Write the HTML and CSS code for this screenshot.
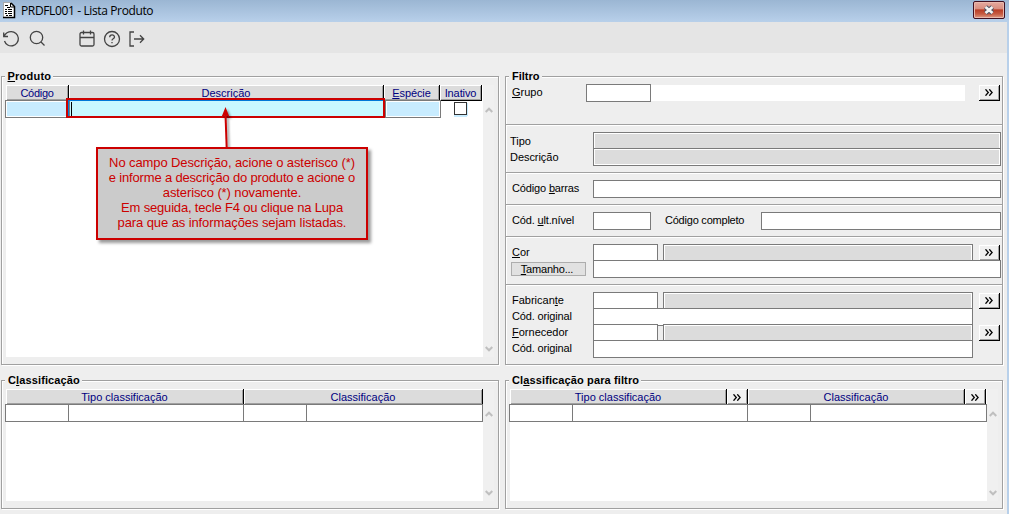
FILE: index.html
```
<!DOCTYPE html>
<html lang="pt-BR">
<head>
<meta charset="utf-8">
<title>PRDFL001 - Lista Produto</title>
<link rel="stylesheet" href="styles.css">
</head>
<body>
<svg class="defs" width="0" height="0">
  <symbol id="more" viewBox="0 0 8 7"><path d="M.5 .3L3.300 3.500L.5 6.700M4.300 .3L7.100 3.500L4.300 6.700" fill="none" stroke="#000" stroke-width="1.300"/></symbol>
  <symbol id="up" viewBox="0 0 8 6"><path d="M.7 5L4 1.7L7.3 5" fill="none" stroke="#bfbfbf" stroke-width="2"/></symbol>
  <symbol id="down" viewBox="0 0 8 6"><path d="M.7 1L4 4.3L7.3 1" fill="none" stroke="#bfbfbf" stroke-width="2"/></symbol>
</svg>
<div class="window">
  <header class="titlebar">
    <svg class="doc" width="14" height="17" viewBox="0 0 14 17"><path d="M1 1H9L13 5V16H1Z" fill="#fff"/><path d="M1.500 1V15M1 .5H9" stroke="#aaa"/><path d="M1 15.500H12.500V4.500L9 1" fill="none" stroke="#000" stroke-width="1.500"/><path d="M8.500 1V5H12" fill="none" stroke="#000"/><path d="M3 3.500H6M5 5.500H8M3 7.500H5M6 7.500H10M3 9.500H5M6 9.500H10M3 11.500H5M6 11.500H10M4 13.500H6M7 13.500H10" stroke="#000"/></svg>
    <span class="title">PRDFL001 - Lista Produto</span>
    <button class="close" aria-label="Fechar"><svg width="12" height="10" viewBox="0 0 12 10"><path d="M2.500 2L9.500 8M9.500 2L2.500 8" stroke="#4b5263" stroke-width="4.600"/><path d="M2.500 2L9.500 8M9.500 2L2.500 8" stroke="#f4f4f4" stroke-width="2.700"/></svg></button>
  </header>
  <nav class="toolbar">
    <svg width="18" height="18" viewBox="0 0 18 18"><path d="M1.700 2.500V6.500H6M2 6.300C3.600 3.200 6 1.700 9.200 1.700A7.100 7.100 0 1 1 2.500 11"/></svg>
    <svg class="lens" width="18" height="18" viewBox="0 0 18 18"><circle cx="7.500" cy="7.500" r="6.200"/><path d="M12 12L15.500 15.500"/></svg>
    <svg class="cal" width="18" height="18" viewBox="0 0 18 18"><rect x="2" y="2.500" width="14" height="13.500" rx="1.500"/><path d="M2 7.500H16M5.500 .5V4.500M12.500 .5V4.500"/></svg>
    <svg class="help" width="18" height="18" viewBox="0 0 18 18"><circle cx="9" cy="9" r="7.500"/><path d="M6.700 7.200C6.700 4.200 11.500 4.200 11.500 7C11.500 8.800 9 8.800 9 10.500M9 12V13.300"/></svg>
    <svg class="exit" width="18" height="18" viewBox="0 0 18 18"><path d="M6 2H2V16H6M6 9H15.500M12 5.300L15.700 9L12 12.700"/></svg>
  </nav>
  <main class="panels">
    <section class="panel">
      <h2 class="legend l-prod"><u>P</u>roduto</h2>
      <div class="grid">
        <div class="sheet">
          <div class="head"><span class="c1">Código</span><span class="c2">Descrição</span><span class="c3"><u>E</u>spécie</span><span class="c4">Inativo</span></div>
          <div class="row active"><i class="code"></i><i class="desc"></i><i class="kind"></i><b class="check"></b></div>
        </div>
        <div class="scroll"><svg width="8" height="6"><use href="#up"/></svg><svg width="8" height="6"><use href="#down"/></svg></div>
      </div>
    </section>
    <section class="panel filter">
      <h2 class="legend l-filt">Filtro</h2>
      <div class="sec s-group">
        <div class="line"><label class="w-grp"><u>G</u>rupo</label><i class="field w65"></i><i class="plain"></i><button class="more gap14"><svg width="8" height="7"><use href="#more"/></svg></button></div>
      </div>
      <div class="sec s-type">
        <div class="line"><label class="shift">Tipo</label><i class="field off w408"></i></div>
        <div class="line"><label class="shift">Descrição</label><i class="field off w408"></i></div>
      </div>
      <div class="sec"><div class="line"><label class="tight">Código <u>b</u>arras</label><i class="field w408"></i></div></div>
      <div class="sec"><div class="line"><label class="tight">Cód. <u>u</u>lt.nível</label><i class="field w58"></i><label class="full">Código completo</label><i class="field w240"></i></div></div>
      <div class="sec s-two">
        <div class="line"><label><u>C</u>or</label><i class="field w65"></i><i class="field off w310"></i><button class="more"><svg width="8" height="7"><use href="#more"/></svg></button></div>
        <div class="line"><button class="size"><u>T</u>amanho...</button><i class="field w408"></i></div>
      </div>
      <div class="sec s-four">
        <div class="line"><label>Fabrican<u>t</u>e</label><i class="field w65"></i><i class="field off w310"></i><button class="more"><svg width="8" height="7"><use href="#more"/></svg></button></div>
        <div class="line"><label class="tight">Cód. original</label><i class="field w380"></i></div>
        <div class="line"><label><u>F</u>ornecedor</label><i class="field w65"></i><i class="field off w310"></i><button class="more"><svg width="8" height="7"><use href="#more"/></svg></button></div>
        <div class="line"><label class="tight">Cód. original</label><i class="field w380"></i></div>
      </div>
    </section>
    <section class="panel">
      <h2 class="legend">C<u>l</u>assificação</h2>
      <div class="grid">
        <div class="sheet">
          <div class="head low"><span class="k1">Tipo classificação</span><span class="k2">Classificação</span></div>
          <div class="row cells"><i></i><i></i><i></i><i></i></div>
        </div>
        <div class="scroll"><svg width="8" height="6"><use href="#up"/></svg><svg width="8" height="6"><use href="#down"/></svg></div>
      </div>
    </section>
    <section class="panel">
      <h2 class="legend">Cl<u>a</u>ssificação para filtro</h2>
      <div class="grid">
        <div class="sheet">
          <div class="head low"><span class="m1">Tipo classificação</span><span class="go"><svg width="8" height="7"><use href="#more"/></svg></span><span class="m2">Classificação</span><span class="go"><svg width="8" height="7"><use href="#more"/></svg></span></div>
          <div class="row cells"><i></i><i></i><i></i><i></i></div>
        </div>
        <div class="scroll"><svg width="8" height="6"><use href="#up"/></svg><svg width="8" height="6"><use href="#down"/></svg></div>
      </div>
    </section>
  </main>
  <div class="mark"></div>
  <svg class="arrow" width="20" height="42" viewBox="0 0 20 42"><path d="M10.700 42L9.500 8" stroke="#cc0000" stroke-width="2"/><path d="M9.500 1L13.500 11Q9.500 8.500 5.500 11Z" fill="#cc0000"/></svg>
  <div class="callout">
    <p>No campo Descrição, acione o asterisco (*)</p>
    <p class="narrow">e informe a descrição do produto e acione o</p>
    <p>asterisco (*) novamente.</p>
    <p class="narrow">Em seguida, tecle F4 ou clique na Lupa</p>
    <p>para que as informações sejam listadas.</p>
  </div>
</div>
</body>
</html>
```
FILE: styles.css
```
* { box-sizing: border-box; }
body { margin: 0; font: 11px/16px "Liberation Sans", Arial, sans-serif; color: #000; background: #eee; overflow: hidden; }
.defs { display: block; position: absolute; }
button { margin: 0; padding: 0; font: inherit; color: #000; }
u { text-decoration: underline; text-underline-offset: 1px; text-decoration-thickness: 1px; text-decoration-skip-ink: none; }
.window { position: relative; width: 1009px; height: 514px; background: #eee; border-right: 2px solid #b8d0ea; }
.titlebar { display: flex; align-items: flex-start; width: 1009px; height: 22px; background: linear-gradient(#9bb6d3, #b8d0ea); }
.doc { margin: 2px 0 0 2px; }
.title { margin-left: 5px; font: 12px/22px "Open Sans", sans-serif; letter-spacing: -0.37px; white-space: nowrap; }
.close { display: flex; align-items: center; justify-content: center; width: 32px; height: 18px; margin: 1px 4px 0 auto; border: 1px solid #401020; border-radius: 2px; background: linear-gradient(#e4aaa0 0%, #d88d7e 45%, #b83c25 48%, #c75b42 75%, #dc9b84 100%); box-shadow: inset 0 0 0 1px #e9b9ae; }
.toolbar { display: flex; align-items: center; height: 31px; padding: 2px 0 0 2px; background: #e5e5e5; }
.toolbar svg { fill: none; stroke: #444; stroke-width: 1.300; }
.toolbar .lens { margin-left: 9px; }
.toolbar .cal { margin-left: 31px; }
.toolbar .help { margin-left: 7px; }
.toolbar .exit { margin-left: 7px; }
.panels { display: grid; grid-template-columns: 498px 498px; grid-template-rows: 289px 129px; gap: 15px 6px; padding: 23px 0 0 1px; }
.panel { position: relative; border: 1px solid #a0a0a0; box-shadow: inset 1px 1px 0 #fff, 1px 1px 0 #fff; padding: 8px 3px 7px 4px; }
.legend { position: absolute; left: 3px; top: -9px; margin: 0; padding: 0 2px 0 3px; background: #eee; font-size: 11px; line-height: 16px; letter-spacing: 0.12px; white-space: nowrap; }
.l-prod { left: 2.500px; letter-spacing: 0.220px; }
.filter .l-filt { letter-spacing: 0; }
.grid { display: flex; height: 100%; }
.sheet { width: 477px; background: #fff; }
.head { display: flex; height: 16px; color: #000080; }
.head span { display: flex; align-items: center; justify-content: center; background: #dcdcdc; border-right: 1px solid #000; border-bottom: 1px solid #000; box-shadow: inset 1px 1px 0 #fff, inset -1px -1px 0 #a0a0a0; white-space: nowrap; }
.low { height: 15px; }
.head.low span { border-bottom: 0; padding-top: 1px; }
.c1 { width: 63px; letter-spacing: -0.3px; } .c2 { width: 315px; } .c3 { width: 56px; letter-spacing: -0.1px; } .c4 { width: 42px; letter-spacing: -0.1px; }
.k1 { width: 238px; } .k2 { width: 239px; }
.m1 { width: 217px; } .m2 { width: 217px; }
.head .go { width: 21px; background: #f0f0f0; }
.row { display: flex; }
.active { height: 18px; margin: -1px 0 0 -1px; }
.active i { border: 1px solid #7a7a7a; }
.code { width: 64px; background: #c8ecff; box-shadow: inset 0 0 0 1px #fff; }
.desc { width: 316px; background: #c8f8ff; }
.kind { width: 56px; background: #c8ecff; box-shadow: inset 0 0 0 1px #fff; }
.check { width: 13px; height: 13px; margin: 2px 0 0 13px; background: #fff; border: 1px solid #333; box-shadow: 1px 1px 0 #c8ecff, 0 2px 0 #c8ecff; }
.cells { height: 18px; width: 478px; margin-left: -1px; border: 1px solid #7a7a7a; }
.cells i { border-right: 1px solid #7a7a7a; }
.cells i:nth-child(1) { width: 63px; }
.cells i:nth-child(2) { width: 175px; }
.cells i:nth-child(3) { width: 63px; }
.cells i:nth-child(4) { border: 0; }
.scroll { display: flex; flex-direction: column; justify-content: space-between; align-items: center; width: 11px; background: #f0f0f0; padding: 22px 0 5px; }
.sec { height: 32px; border-top: 1px solid #a0a0a0; box-shadow: inset 0 1px 0 #fff; padding: 7px 0 0 6px; }
.filter { padding: 0; }
.filter .s-group { height: 47px; border: 0; box-shadow: none; padding-top: 7px; }
.s-type, .s-two { height: 48px; }
.s-four { height: 79px; }
.line { display: flex; height: 16px; white-space: nowrap; }
.line label { width: 81px; flex: none; }
.line .w-grp { width: 74px; }
.line .shift { margin-left: -2px; width: 83px; padding-top: 1px; letter-spacing: -0.05px; }
.line .tight { letter-spacing: -0.150px; }
.line .full { width: 110px; padding-left: 14px; letter-spacing: -0.220px; }
.field { flex: none; height: 18px; border: 1px solid #7a7a7a; background: #fff; }
.field.off { background: #dcdcdc; box-shadow: inset 0 0 0 1px #fff; }
.w65 { width: 65px; }
.w408 { width: 408px; }
.w58 { width: 58px; }
.w240 { width: 240px; }
.w380 { width: 380px; }
.w310 { width: 310px; margin-left: 5px; }
.plain { width: 314px; height: 16px; margin-top: 1px; background: #fff; }
.more { display: flex; align-items: center; justify-content: center; flex: none; width: 21px; height: 16px; margin: 1px 0 0 6px; border: 1px solid #000; border-width: 0 1px 1px 0; background: #f0f0f0; box-shadow: inset 1px 1px 0 #fff, inset -1px -1px 0 #a0a0a0; }
.gap14 { margin-left: 14px; }
.size { width: 75px; height: 14px; margin: 2px 7px 0 -1px; padding-right: 3px; border: 1px solid #adadad; background: #e1e1e1; line-height: 12px; letter-spacing: -0.2px; }
.mark { position: absolute; left: 66px; top: 98px; width: 319px; height: 20px; border: 2px solid #cc0000; box-shadow: inset 1px 1px 0 #0078d7; }
.mark::after { content: ""; position: absolute; left: 3px; top: 2px; width: 1px; height: 14px; background: #000; }
.arrow { position: absolute; left: 216px; top: 106px; filter: drop-shadow(2px 2px 1px #0006); }
.callout { position: absolute; left: 96px; top: 147px; width: 272px; height: 93px; border: 2px solid #cc0000; background: #cbcbcb; box-shadow: 3px 3px 3px #0006; padding: 7px 0 0; color: #cc0000; font-size: 13px; line-height: 14.900px; letter-spacing: -0.1px; text-align: center; white-space: nowrap; }
.callout p { margin: 0; }
.callout .narrow { letter-spacing: -0.170px; }
```
